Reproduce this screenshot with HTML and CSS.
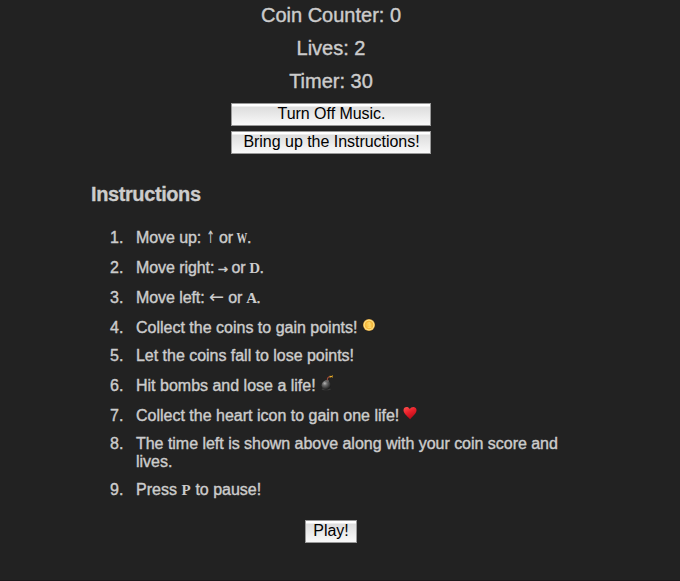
FILE: index.html
```html
<!DOCTYPE html>
<html lang="en">
<head>
<meta charset="utf-8">
<title>Coin Game</title>
<link rel="stylesheet" href="styles.css">
</head>
<body>
<main class="game">
  <div class="stats">
    <p class="coin">Coin Counter: 0</p>
    <p class="lives">Lives: 2</p>
    <p class="timer">Timer: 30</p>
  </div>
  <div class="controls">
    <button class="btn music"><span>Turn Off Music.</span></button>
    <button class="btn help"><span>Bring up the Instructions!</span></button>
  </div>
  <section class="instructions">
    <h2>Instructions</h2>
    <ol>
      <li><b>1.</b><p class="keys">Move up: <span class="arrow up">↑</span> or <code class="wide">W</code>.</p></li>
      <li class="tall"><b>2.</b><p class="keys">Move right: <span class="arrow right">→</span> or <code>D</code>.</p></li>
      <li class="tall"><b>3.</b><p class="keys">Move left: <span class="arrow left">←</span> or <code>A</code>.</p></li>
      <li class="tall"><b>4.</b><p>Collect the coins to gain points! <svg class="icon" viewBox="0 0 14 14"><defs><radialGradient id="gold"><stop offset="0" stop-color="#ffd45c"/><stop offset=".65" stop-color="#f4b63b"/><stop offset=".8" stop-color="#ffe58b"/><stop offset="1" stop-color="#d99b35"/></radialGradient></defs><circle cx="7" cy="7" r="6" fill="url(#gold)"/><path d="M5.5 5.2 8 4.6v4.7M5.7 9.4h3.6" fill="none" stroke="#ffe07c" stroke-width=".8"/></svg></p></li>
      <li><b>5.</b><p class="falling">Let the coins fall to lose points!</p></li>
      <li class="tall"><b>6.</b><p>Hit bombs and lose a life! <svg class="icon bomb" viewBox="0 0 14 16"><defs><radialGradient id="iron" cx=".35" cy=".3" r=".7"><stop offset="0" stop-color="#b5b5b5"/><stop offset=".35" stop-color="#6a6a6a"/><stop offset="1" stop-color="#1b1b1b"/></radialGradient></defs><ellipse cx="5.2" cy="14.3" rx="4.5" ry="1" fill="#3c3c3c"/><circle cx="5.2" cy="10.2" r="4.6" fill="url(#iron)"/><path d="M4.3 5.1h3.4v2H4.3z" fill="#666"/><path d="M6.3 5.3C6.3 3 7.2 1.6 9 1.7" fill="none" stroke="#9b4938" stroke-width="1.1"/><path d="m8.5.7 2 .2 1.4-.9-.4 1.4.6 1.3-1.6-.6-1.7.6z" fill="#e9aa25"/></svg></p></li>
      <li class="tall"><b>7.</b><p>Collect the heart icon to gain one life! <svg class="icon heart" viewBox="0 0 14 14"><defs><linearGradient id="red" x2=".5" y2="1"><stop offset="0" stop-color="#ff5451"/><stop offset=".5" stop-color="#e9202a"/><stop offset="1" stop-color="#b80c18"/></linearGradient></defs><path d="M7.2 13.3C5.4 10.8.7 8 .5 4.4.4.7 5.2-.2 6.8 3.1 8.3.1 13.1.2 13.5 3.8c.4 3.5-4.5 6.7-6.3 9.5z" fill="url(#red)"/></svg></p></li>
      <li><b>8.</b><p class="long">The time left is shown above along with your coin score and<br>lives.</p></li>
      <li><b>9.</b><p>Press <code>P</code> to pause!</p></li>
    </ol>
  </section>
  <button class="btn play"><span>Play!</span></button>
</main>
</body>
</html>
```
FILE: styles.css
```css
* { box-sizing: border-box; }
body {
  margin: 0;
  height: 581px;
  overflow: hidden;
  background: #222;
  border-bottom: 1px solid #1b181b;
  color: #ccc;
  font: 16px/18px "Liberation Sans", Arial, sans-serif;
}
.game {
  width: 662px;
  display: flex;
  flex-direction: column;
  align-items: center;
}
p { margin: 0; }
.stats {
  font-size: 20px;
  line-height: 33px;
  height: 103px;
  margin-top: -1px;
  text-align: center;
  -webkit-text-stroke: .4px #ccc;
}
.controls {
  display: flex;
  flex-direction: column;
  gap: 5px;
  margin-top: 1px;
}
.btn {
  display: block;
  height: 23px;
  padding: 0 0 2px;
  border: 1px solid #999;
  border-radius: 0;
  background: linear-gradient(#fff 0, #fff 2px, #ddd 3px, #f9f9f9 100%);
  color: #000;
  font: 16px/18px "Liberation Sans", Arial, sans-serif;
  text-align: center;
  white-space: nowrap;
}
.controls .btn {
  width: 200px;
  padding-left: 1px;
  letter-spacing: -.03px;
}
.instructions {
  width: 480px;
  margin-top: 29px;
}
h2 {
  margin: 0;
  font-size: 20px;
  line-height: 22px;
  letter-spacing: -.4px;
  -webkit-text-stroke: .3px #ccc;
}
ol {
  list-style: none;
  margin: 24px 0 0;
  padding: 0;
}
li {
  display: flex;
  margin-bottom: 10px;
  -webkit-text-stroke: .4px #ccc;
}
li b {
  width: 45px;
  padding-left: 19px;
  font-weight: 400;
}
li p { white-space: nowrap; }
.keys { letter-spacing: -.08px; }
.falling, .long { letter-spacing: -.025px; }
.tall { padding-top: 2px; }
code {
  display: inline-flex;
  justify-content: center;
  width: 9.6px;
  font: 700 15px/1 "Liberation Serif", serif;
  letter-spacing: 0;
  -webkit-text-stroke: 0;
}
.wide { transform: scaleX(.72); }
.arrow {
  display: inline-flex;
  justify-content: center;
  letter-spacing: 0;
  -webkit-text-stroke: 0;
}
.up {
  width: 9px;
  font: 17px/16px "DejaVu Sans", sans-serif;
  transform: scaleX(.6);
}
.right {
  width: 8.5px;
  font: 12px/16px "DejaVu Sans", sans-serif;
  -webkit-text-stroke: .5px #ccc;
}
.left {
  width: 15px;
  font: 18px/16px "DejaVu Sans", sans-serif;
}
.icon {
  width: 14px;
  height: 14px;
  margin: -6px 0 0;
  vertical-align: 1px;
}
.bomb {
  height: 16px;
  margin-left: 1px;
  vertical-align: 0;
}
.heart { margin-left: -1px; }
.play {
  width: 52px;
  margin-top: 11px;
}
```
